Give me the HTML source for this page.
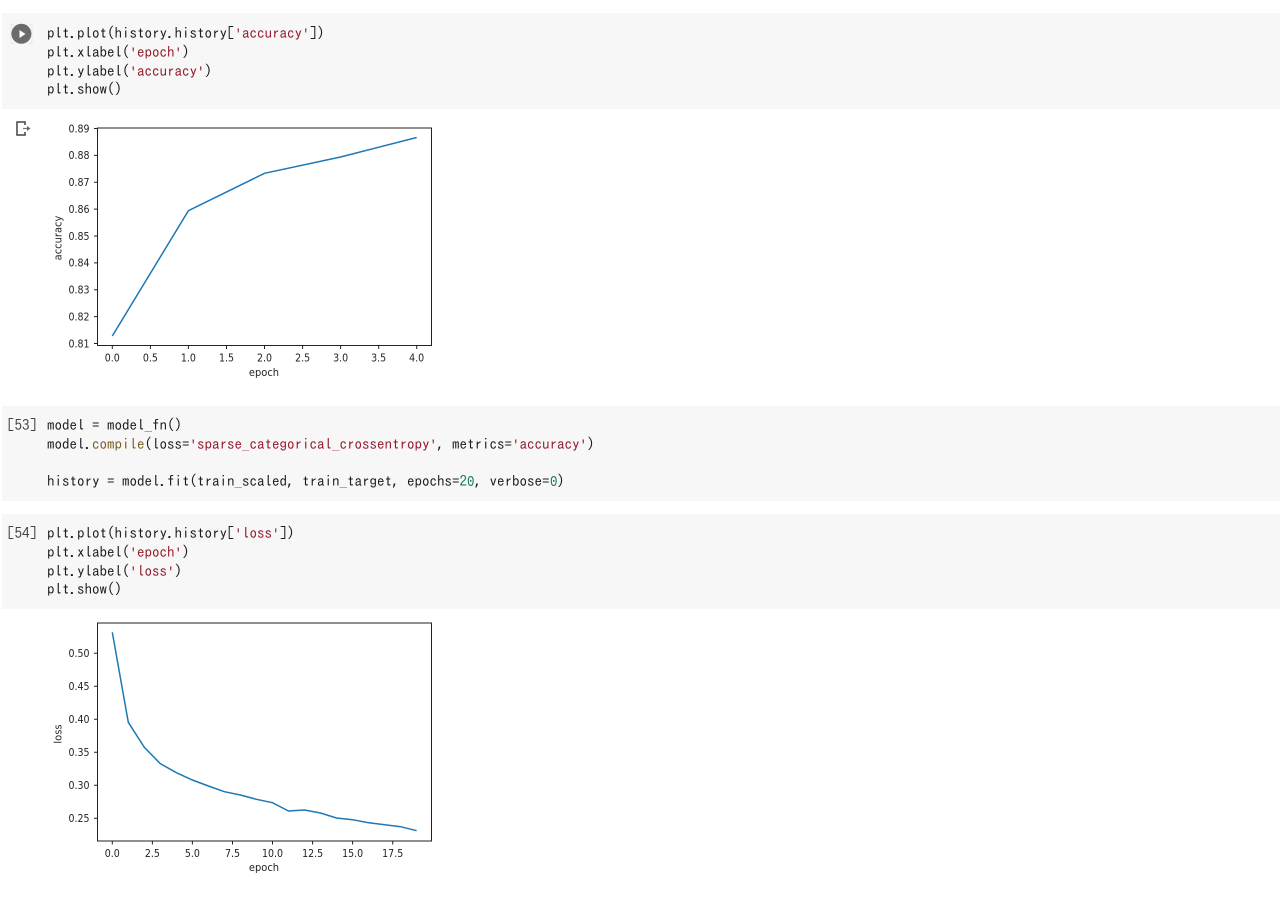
<!DOCTYPE html>
<html>
<head>
<meta charset="utf-8">
<style>
html,body{margin:0;padding:0;background:#fff;width:1280px;height:897px;overflow:hidden}
.cell{position:absolute;left:2px;width:1278px;background:#f7f7f7}
.l{position:absolute;left:47px;font:15px/19px "IPAGothic","Liberation Mono",monospace;color:#1c1c1c;white-space:pre;height:19px;filter:blur(.25px)}
.n{position:absolute;left:7px;font:15px/19px "IPAGothic","Liberation Mono",monospace;color:#424242;white-space:pre;filter:blur(.25px)}
.s{color:#931b2b}.f{color:#795e26}.d{color:#0f7a60}
.q{font:12.5px/19px "Liberation Mono",monospace;display:inline-block;width:7.5px}
.z{font:14.5px/19px "Liberation Mono",monospace;display:inline-block;width:7.5px;transform:scaleX(.86);transform-origin:left center}
svg{position:absolute;left:0;top:0}
svg text{font-family:"DejaVu Sans Condensed","Liberation Sans",sans-serif;font-size:10.5px;fill:#222}
svg text.a{font-size:11px}
.chart{filter:blur(.25px)}
</style>
</head>
<body>
<div class="cell" style="top:13px;height:96px"></div>
<div class="cell" style="top:406px;height:95px"></div>
<div class="cell" style="top:514px;height:95px"></div>

<div class="l" style="top:23px">plt.plot(history.history[<span class="s"><span class="q">'</span>accuracy<span class="q">'</span></span>])</div>
<div class="l" style="top:42px">plt.xlabel(<span class="s"><span class="q">'</span>epoch<span class="q">'</span></span>)</div>
<div class="l" style="top:61px">plt.ylabel(<span class="s"><span class="q">'</span>accuracy<span class="q">'</span></span>)</div>
<div class="l" style="top:79px">plt.show()</div>

<div class="n" style="top:415px">[53]</div>
<div class="l" style="top:415px">model = model_fn()</div>
<div class="l" style="top:434px">model.<span class="f">compile</span>(loss=<span class="s"><span class="q">'</span>sparse_categorical_crossentropy<span class="q">'</span></span>, metrics=<span class="s"><span class="q">'</span>accuracy<span class="q">'</span></span>)</div>
<div class="l" style="top:471px">history = model.fit(train_scaled, train_target, epochs=<span class="d">2<span class="z">0</span></span>, verbose=<span class="d"><span class="z">0</span></span>)</div>

<div class="n" style="top:523px">[54]</div>
<div class="l" style="top:523px">plt.plot(history.history[<span class="s"><span class="q">'</span>loss<span class="q">'</span></span>])</div>
<div class="l" style="top:542px">plt.xlabel(<span class="s"><span class="q">'</span>epoch<span class="q">'</span></span>)</div>
<div class="l" style="top:561px">plt.ylabel(<span class="s"><span class="q">'</span>loss<span class="q">'</span></span>)</div>
<div class="l" style="top:579px">plt.show()</div>

<svg class="chart" width="1280" height="897" viewBox="0 0 1280 897">
  <!-- run button -->
  <path d="M14 24.5h-3v19h3M29 24.5h3v19h-3" fill="none" stroke="#e8e8e8" stroke-width="1"/>
  <circle cx="21.4" cy="33.8" r="10" fill="#6b6b6b"/>
  <path d="M19.5 30l6 4-6 4z" fill="#fff"/>
  <!-- output icon -->
  <path d="M25 125v-3h-8v13h8v-3" fill="none" stroke="#444" stroke-width="1.5"/>
  <path d="M23 128.5h4" fill="none" stroke="#777" stroke-width="1.2"/>
  <path d="M27 126l3.5 2.5-3.5 2.5z" fill="#666"/>

  <!-- accuracy chart -->
  <g fill="none" stroke="#222" stroke-width="1">
    <rect x="97.5" y="128" width="334" height="217.5"/>
    <path d="M112.3 345.5v3.5M150.4 345.5v3.5M188.4 345.5v3.5M226.5 345.5v3.5M264.5 345.5v3.5M302.6 345.5v3.5M340.6 345.5v3.5M378.7 345.5v3.5M416.7 345.5v3.5"/>
    <path d="M97.5 128.5h-3.5M97.5 155.4h-3.5M97.5 182.3h-3.5M97.5 209.1h-3.5M97.5 236h-3.5M97.5 262.9h-3.5M97.5 289.7h-3.5M97.5 316.6h-3.5M97.5 343.5h-3.5"/>
  </g>
  <path d="M112.3 336L188.4 210.7L264.5 173.3L340.6 157L416.7 137.5" fill="none" stroke="#1f77b4" stroke-width="1.5"/>
  <g text-anchor="end">
    <text x="89.5" y="132.3">0.89</text><text x="89.5" y="159.2">0.88</text><text x="89.5" y="186.1">0.87</text>
    <text x="89.5" y="212.9">0.86</text><text x="89.5" y="239.8">0.85</text><text x="89.5" y="266.7">0.84</text>
    <text x="89.5" y="293.5">0.83</text><text x="89.5" y="320.4">0.82</text><text x="89.5" y="347.3">0.81</text>
  </g>
  <g text-anchor="middle">
    <text x="112.3" y="361.5">0.0</text><text x="150.4" y="361.5">0.5</text><text x="188.4" y="361.5">1.0</text>
    <text x="226.5" y="361.5">1.5</text><text x="264.5" y="361.5">2.0</text><text x="302.6" y="361.5">2.5</text>
    <text x="340.6" y="361.5">3.0</text><text x="378.7" y="361.5">3.5</text><text x="416.7" y="361.5">4.0</text>
    <text class="a" x="264" y="376">epoch</text>
    <text class="a" transform="translate(61.5 238) rotate(-90)">accuracy</text>
  </g>

  <!-- loss chart -->
  <g fill="none" stroke="#222" stroke-width="1">
    <rect x="97.5" y="623" width="334" height="218"/>
    <path d="M112.3 841v3.5M152.4 841v3.5M192.4 841v3.5M232.5 841v3.5M272.5 841v3.5M312.6 841v3.5M352.6 841v3.5M392.7 841v3.5"/>
    <path d="M97.5 653.3h-3.5M97.5 686.3h-3.5M97.5 719.3h-3.5M97.5 752.3h-3.5M97.5 785.3h-3.5M97.5 818.3h-3.5"/>
  </g>
  <path d="M112.3 632.3L128.3 722.3L144.3 747.3L160.3 763.7L176.4 772.7L192.4 780L208.4 786L224.4 791.7L240.4 795L256.4 799.3L272.5 802.7L288.5 811L304.5 810L320.5 813L336.5 818L352.6 819.7L368.6 822.7L384.6 824.7L400.6 826.7L416.7 830.7" fill="none" stroke="#1f77b4" stroke-width="1.5"/>
  <g text-anchor="end">
    <text x="89.5" y="657.1">0.50</text><text x="89.5" y="690.1">0.45</text><text x="89.5" y="723.1">0.40</text>
    <text x="89.5" y="756.1">0.35</text><text x="89.5" y="789.1">0.30</text><text x="89.5" y="822.1">0.25</text>
  </g>
  <g text-anchor="middle">
    <text x="112.3" y="857">0.0</text><text x="152.4" y="857">2.5</text><text x="192.4" y="857">5.0</text>
    <text x="232.5" y="857">7.5</text><text x="272.5" y="857">10.0</text><text x="312.6" y="857">12.5</text>
    <text x="352.6" y="857">15.0</text><text x="392.7" y="857">17.5</text>
    <text class="a" x="264" y="871">epoch</text>
    <text class="a" transform="translate(61.5 734) rotate(-90)">loss</text>
  </g>
</svg>
</body>
</html>
